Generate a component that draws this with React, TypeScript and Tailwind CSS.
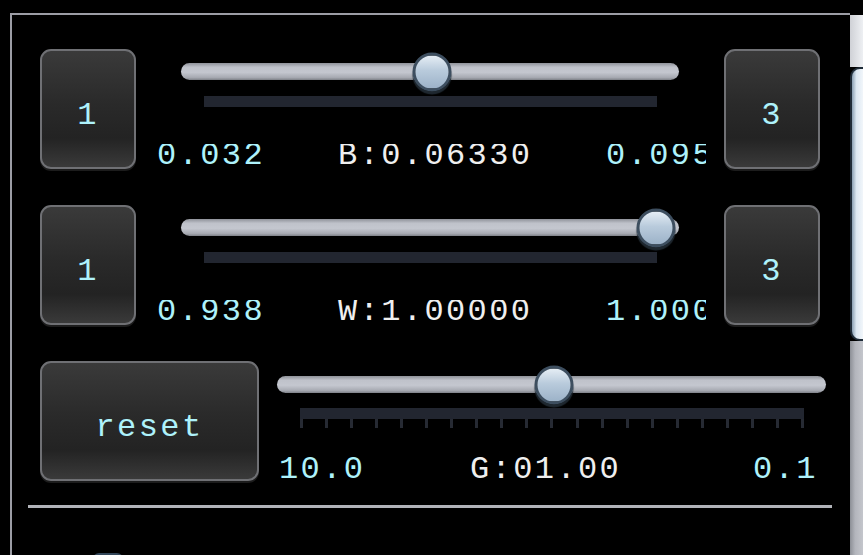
import React from "react";

const mono = "font-['Liberation_Mono','DejaVu_Sans_Mono',monospace]";

function Btn({ label, wide }: { label: string; wide?: boolean }) {
  return (
    <div
      className={`${wide ? "w-[219px]" : "w-[96px]"} h-[120px] shrink-0 rounded-[11px] border-2 border-[#6f7074] bg-[linear-gradient(#3a3a3a,#2a2a2a_45%,#232323_75%,#3a3a3a)] shadow-[0_2px_0_#1c1c1c] flex items-center justify-center pt-[13px] ${mono} text-[32px] tracking-[2.4px] text-[#aef2fb]`}
    >
      {label}
    </div>
  );
}

function Track({ pos, width }: { pos: number; width: number }) {
  return (
    <div
      className="relative h-[17px] rounded-full bg-[linear-gradient(#8f9299,#bfc2ca_25%,#c4c7cf_55%,#a7aab2_85%,#7e8188)]"
      style={{ width }}
    >
      <div
        className="absolute top-1/2 w-[39px] h-[39px] -translate-x-1/2 -translate-y-1/2 rounded-full border-[3px] border-[#3d4e5f] bg-[linear-gradient(#e6eef5,#b9cbdc_45%,#9cb2c8)] shadow-[0_3px_1px_#1f2830]"
        style={{ left: pos }}
      />
    </div>
  );
}

function SliderRow({
  min,
  mid,
  max,
  pos,
}: {
  min: string;
  mid: string;
  max: string;
  pos: number;
}) {
  return (
    <div className="flex items-start h-[121px]">
      <Btn label="1" />
      <div className="w-[588px] pt-[14px]">
        <div className="ml-[45px]">
          <Track pos={pos} width={498} />
        </div>
        <div className="ml-[68px] mt-[16px] w-[453px] h-[11px] bg-[#222630]" />
        <div
          className={`ml-[21px] mt-[37px] w-[549px] overflow-hidden whitespace-nowrap flex ${mono} text-[32px] tracking-[2.4px] leading-[24px]`}
        >
          <span className="text-[#aef2fb] w-[181px] shrink-0">{min}</span>
          <span className="text-[#efefef] w-[268px] shrink-0">{mid}</span>
          <span className="text-[#aef2fb] shrink-0">{max}</span>
        </div>
      </div>
      <Btn label="3" />
    </div>
  );
}

export default function App() {
  const ticks = Array.from({ length: 21 });
  return (
    <div className="w-[863px] h-[555px] bg-black overflow-hidden flex pt-[13px] pl-[10px]">
      {/* panel */}
      <div className="w-[840px] h-[560px] border-t-2 border-l-2 border-[#9c9da5] pt-[34px] pl-[28px] shrink-0">
        <SliderRow min="0.032" mid="B:0.06330" max="0.09500" pos={251} />
        <div className="h-[35px]" />
        <SliderRow min="0.938" mid="W:1.00000" max="1.00000" pos={475} />
        <div className="h-[35px]" />

        {/* gamma row */}
        <div className="flex items-start h-[121px]">
          <Btn label="reset" wide />
          <div className="pt-[15px] pl-[18px]">
            <Track pos={277} width={549} />
            <div className="ml-[23px] mt-[15px] w-[504px]">
              <div className="h-[11px] bg-[#222630]" />
              <div className="flex justify-between">
                {ticks.map((_, i) => (
                  <div key={i} className="w-[3px] h-[9px] bg-[#262a33]" />
                ))}
              </div>
            </div>
            <div
              className={`mt-[30px] ml-[2px] flex whitespace-nowrap ${mono} text-[32px] tracking-[2.4px] leading-[24px]`}
            >
              <span className="text-[#aef2fb] w-[191px] shrink-0">10.0</span>
              <span className="text-[#efefef] w-[283px] shrink-0">G:01.00</span>
              <span className="text-[#aef2fb]">0.1</span>
            </div>
          </div>
        </div>

        <div className="mt-[23px] -ml-[12px] w-[804px] h-[3px] bg-[#b1b3b9]" />
        <div className="mt-[45px] ml-[53px] w-[30px] h-[10px] rounded-t-[6px] border-t-2 border-[#33475a] bg-[#111820]" />
      </div>

      {/* right edge strip */}
      <div className="w-[13px] flex flex-col pt-[2px] shrink-0">
        <div className="h-[52px] bg-[linear-gradient(90deg,#cfd1d6,#eef0f3)]" />
        <div className="h-[274px] rounded-tl-[10px] rounded-bl-[10px] border-t-2 border-b-2 border-l-2 border-[#1f2c38] bg-[linear-gradient(90deg,#8aa0b4,#dce8f2_40%,#f2f6fa)]" />
        <div className="flex-1 bg-[linear-gradient(90deg,#8c8f96,#b3b5bc_40%,#c4c6cc)]" />
      </div>
    </div>
  );
}
